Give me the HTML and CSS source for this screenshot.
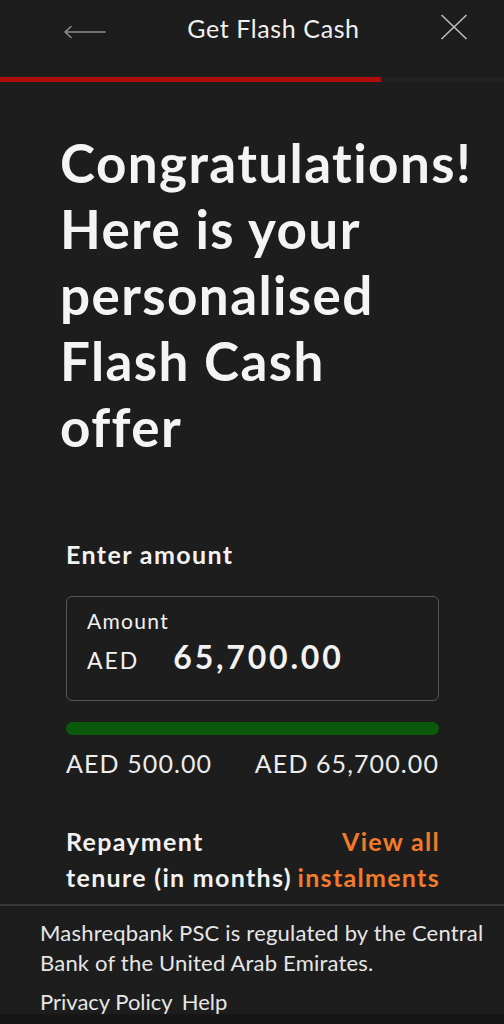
FILE: index.html
```html
<!DOCTYPE html>
<html>
<head>
	<title>Get Flash Cash</title>
	<meta charset="UTF-8">
	<link rel="stylesheet" href="styles.css">
</head>
<body>
	<div class="top-bar">
		<span class="back-icon">
			<svg width="44" height="14" viewBox="0 0 44 14"><path d="M2 7H42M2 7L8 1.5M2 7L8 12.5" stroke="#8c8c8c" stroke-width="1.6" fill="none" stroke-linecap="round"/></svg>
		</span>
		<span class="top-title">Get Flash Cash</span>
		<span class="close-icon">
			<svg width="28" height="26" viewBox="0 0 28 26"><path d="M1.5 1L26.5 25M26.5 1L1.5 25" stroke="#bdbdbd" stroke-width="1.6" fill="none"/></svg>
		</span>
	</div>
	<div class="progress"><div class="progress-fill"></div></div>

	<div class="content">
		<h1 class="offer-title">Congratulations! Here is your personalised Flash Cash offer</h1>

		<p class="section-label">Enter amount</p>
		<div class="amount-box">
			<div class="amount-label">Amount</div>
			<div class="amount-row">
				<span class="currency">AED</span>
				<span class="amount-value">65,700.00</span>
			</div>
		</div>

		<div class="slider"></div>
		<div class="range-row">
			<span>AED 500.00</span>
			<span>AED 65,700.00</span>
		</div>

		<div class="tenure-row">
			<span class="tenure-label">Repayment<br>tenure (in months)</span>
			<a class="tenure-link" href="#">View all<br>instalments</a>
		</div>
	</div>

	<div class="footer">
		<p class="footer-text">Mashreqbank PSC is regulated by the Central Bank of the United Arab Emirates.</p>
		<div class="footer-links">
			<a href="#">Privacy Policy</a>
			<a href="#">Help</a>
		</div>
	</div>
	<div class="bottom-strip"></div>
</body>
</html>
```

FILE: styles.css
```css
body {
	margin: 0;
	background-color: #1d1d1d;
	color: #f2f2f2;
	font-family: Lato, "Liberation Sans", sans-serif;
}

.top-bar {
	display: flex;
	align-items: center;
	justify-content: space-between;
	height: 56px;
	padding: 0 36px 0 63px;
}

.back-icon {
	display: flex;
	margin-top: 8px;
}

.top-title {
	font-size: 25px;
	line-height: 30px;
	letter-spacing: 0.6px;
	color: #f0f0f0;
}

.close-icon {
	display: flex;
	margin-top: -3px;
}

.progress {
	margin-top: 21px;
	height: 5px;
	background-color: #222;
}

.progress-fill {
	width: 381px;
	height: 100%;
	background-color: #b00c0c;
}

.content {
	padding: 0 65px 0 66px;
}

.offer-title {
	margin: 48px 0 0 -6px;
	font-size: 53px;
	line-height: 66px;
	font-weight: 700;
	letter-spacing: 1.4px;
	color: #f4f4f4;
}

.section-label {
	margin: 79px 0 0 0;
	font-size: 25px;
	line-height: 30px;
	font-weight: 700;
	letter-spacing: 1.4px;
}

.amount-box {
	margin-top: 27px;
	height: 105px;
	box-sizing: border-box;
	border: 1px solid #565656;
	border-radius: 6px;
	padding: 11px 20px 0 20px;
}

.amount-label {
	font-size: 21px;
	line-height: 26px;
	letter-spacing: 1.3px;
}

.amount-row {
	display: flex;
	align-items: baseline;
	gap: 34px;
	margin-top: 3px;
	line-height: 40px;
}

.currency {
	font-size: 23px;
	letter-spacing: 2px;
}

.amount-value {
	font-size: 32px;
	font-weight: 700;
	letter-spacing: 2.8px;
}

.slider {
	margin-top: 21px;
	height: 13px;
	border-radius: 7px;
	background-color: #0b5a0b;
}

.range-row {
	display: flex;
	justify-content: space-between;
	margin-top: 13px;
	font-size: 25px;
	line-height: 30px;
	letter-spacing: 1.1px;
	color: #ececec;
}

.tenure-row {
	display: flex;
	justify-content: space-between;
	margin-top: 45px;
	font-size: 25px;
	line-height: 36px;
	font-weight: 700;
	letter-spacing: 1.3px;
}

.tenure-link {
	color: #f27b2b;
	text-decoration: none;
	text-align: right;
	margin-right: -1px;
}

.footer {
	margin-top: 9px;
	border-top: 2px solid #3a3a3a;
	padding: 12px 8px 0 40px;
}

.footer-text {
	margin: 0;
	font-size: 22px;
	line-height: 30px;
	letter-spacing: 0.2px;
	color: #e6e6e6;
}

.footer-links {
	display: flex;
	gap: 9px;
	margin-top: 12px;
	font-size: 22px;
	line-height: 24px;
}

.footer-links a {
	color: #e6e6e6;
	text-decoration: none;
}

.bottom-strip {
	height: 20px;
	background-color: #161616;
}
```
